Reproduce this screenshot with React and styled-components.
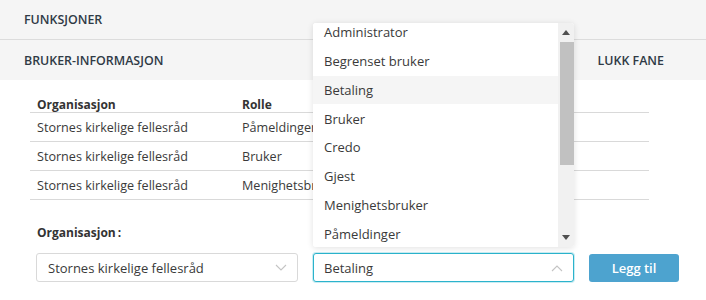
import React, { useEffect, useRef } from "react";
import styled, { createGlobalStyle } from "styled-components";

const Global = createGlobalStyle`
  html, body { margin: 0; padding: 0; background: #fff; }
  body { font-family: "Open Sans", "Noto Sans", sans-serif; color: #333; }
  * { box-sizing: border-box; }
`;

const Page = styled.div`
  width: 706px;
  height: 300px;
  position: relative;
  overflow: hidden;
`;

const Bar = styled.div`
  height: ${p => p.$h}px;
  background: #f5f5f5;
  border-bottom: ${p => (p.$line ? "1px solid #dcdcdc" : "none")};
  display: flex;
  align-items: center;
  justify-content: space-between;
  padding: 0 42px 0 24px;
  font-size: 12.4px;
  font-weight: 600;
  color: #2f3a45;
`;

const Content = styled.div`
  padding: 8px 20px 0 30px;
`;

const Table = styled.div`
  display: grid;
  grid-template-columns: 205px 1fr;
  width: 619px;
`;

const HeadCell = styled.div`
  height: 25px;
  padding: 8px 0 0 7px;
  font-size: 12px;
  font-weight: 700;
  color: #333;
  border-bottom: 1px solid #d9d9d9;
`;

const Cell = styled.div`
  height: 29px;
  display: flex;
  align-items: center;
  padding-left: 7px;
  font-size: 12.6px;
  color: #3a3a3a;
  border-bottom: 1px solid #d9d9d9;
  white-space: nowrap;
  overflow: hidden;
`;

const Label = styled.div`
  margin: 24px 0 0 7px;
  font-size: 12px;
  font-weight: 700;
  color: #333;
`;

const FormRow = styled.div`
  display: flex;
  align-items: center;
  margin: 12px 0 0 6px;
`;

const SelectBox = styled.div`
  position: relative;
  flex-shrink: 0;
  width: ${p => p.$w}px;
  height: 29px;
  margin-right: ${p => p.$mr}px;
  border: 1px solid ${p => (p.$focus ? "#2bb3cc" : "#d9d9d9")};
  box-shadow: ${p => (p.$focus ? "0 0 0 1px rgba(43,179,204,0.25)" : "none")};
  border-radius: 3px;
  display: flex;
  align-items: center;
  justify-content: space-between;
  padding: 0 10px 0 ${p => p.$pl}px;
  font-size: 13px;
  color: #3a3a3a;
  background: #fff;
`;

const Button = styled.button`
  flex-shrink: 0;
  width: 90px;
  height: 28px;
  border: none;
  border-radius: 3px;
  background: #4da3cf;
  color: #fff;
  font-family: inherit;
  font-size: 13px;
  font-weight: 600;
`;

const Dropdown = styled.div`
  position: absolute;
  left: -1px;
  bottom: 34px;
  width: 261px;
  height: 224px;
  background: #fff;
  border-radius: 3px;
  box-shadow: 0 1px 6px rgba(0, 0, 0, 0.12);
  display: flex;
  overflow: hidden;
`;

const List = styled.div`
  flex: 1;
  overflow: hidden;
`;

const Item = styled.div`
  height: 28.75px;
  display: flex;
  align-items: center;
  padding-left: 11px;
  font-size: 13px;
  color: #3a3a3a;
  background: ${p => (p.$active ? "#f5f5f5" : "#fff")};
  white-space: nowrap;
`;

const Scrollbar = styled.div`
  width: 16px;
  background: #f1f1f1;
  display: flex;
  flex-direction: column;
  align-items: center;
`;

const Arrow = styled.div`
  height: 19px;
  width: 16px;
  display: flex;
  align-items: center;
  justify-content: center;
`;

const Thumb = styled.div`
  width: 14px;
  height: 123px;
  background: #c1c1c1;
  margin-left: 1px;
`;

const Spacer = styled.div`
  flex: 1;
`;

const Chevron = ({ up }) => (
  <svg width="12" height="8" viewBox="0 0 12 8">
    <polyline
      points={up ? "1,7 6,2 11,7" : "1,1 6,6 11,1"}
      fill="none"
      stroke="#c4c4c4"
      strokeWidth="1.1"
    />
  </svg>
);

const Tri = ({ up }) => (
  <svg width="8" height="5" viewBox="0 0 8 5">
    <polygon points={up ? "0,5 4,0 8,5" : "0,0 8,0 4,5"} fill="#505050" />
  </svg>
);

const rows = [
  ["Stornes kirkelige fellesråd", "Påmeldinger"],
  ["Stornes kirkelige fellesråd", "Bruker"],
  ["Stornes kirkelige fellesråd", "Menighetsbruker"],
];

const options = [
  "Administrator",
  "Begrenset bruker",
  "Betaling",
  "Bruker",
  "Credo",
  "Gjest",
  "Menighetsbruker",
  "Påmeldinger",
];

export default function App() {
  const listRef = useRef(null);
  useEffect(() => {
    if (listRef.current) listRef.current.scrollTop = 5;
  }, []);
  return (
    <Page>
      <Global />
      <Bar $h={40} $line>FUNKSJONER</Bar>
      <Bar $h={40}>
        <span>BRUKER-INFORMASJON</span>
        <span>LUKK FANE</span>
      </Bar>
      <Content>
        <Table>
          <HeadCell>Organisasjon</HeadCell>
          <HeadCell>Rolle</HeadCell>
          {rows.map((r, i) => (
            <React.Fragment key={i}>
              <Cell>{r[0]}</Cell>
              <Cell>{r[1]}</Cell>
            </React.Fragment>
          ))}
        </Table>
        <Label>Organisasjon{"\u2009"}:</Label>
        <FormRow>
          <SelectBox $w={262} $mr={15} $pl={11}>
            <span>Stornes kirkelige fellesråd</span>
            <Chevron />
          </SelectBox>
          <SelectBox $w={261} $mr={15} $pl={10} $focus>
            <span>Betaling</span>
            <Chevron up />
            <Dropdown>
              <List ref={listRef}>
                {options.map(o => (
                  <Item key={o} $active={o === "Betaling"}>
                    {o}
                  </Item>
                ))}
              </List>
              <Scrollbar>
                <Arrow><Tri up /></Arrow>
                <Thumb />
                <Spacer />
                <Arrow><Tri /></Arrow>
              </Scrollbar>
            </Dropdown>
          </SelectBox>
          <Button>Legg til</Button>
        </FormRow>
      </Content>
    </Page>
  );
}
